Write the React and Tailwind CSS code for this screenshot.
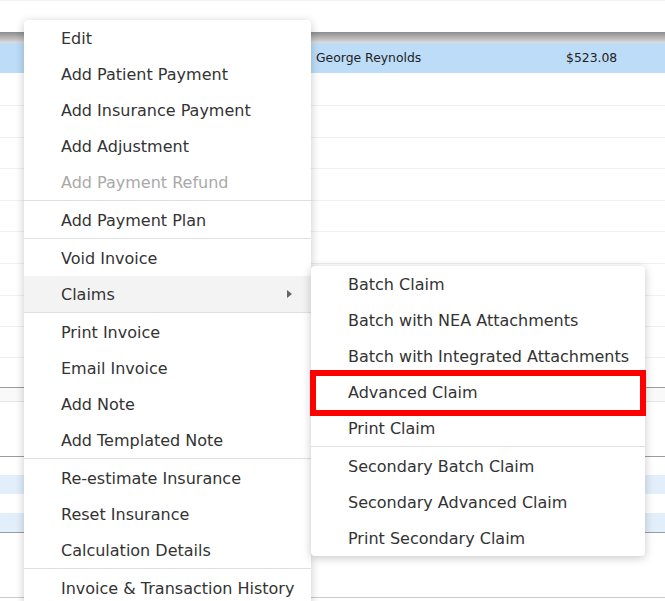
import React from "react";

const mainItems = [
  { t: "Edit" },
  { t: "Add Patient Payment" },
  { t: "Add Insurance Payment" },
  { t: "Add Adjustment" },
  { t: "Add Payment Refund", disabled: true },
  { sep: true },
  { t: "Add Payment Plan" },
  { sep: true },
  { t: "Void Invoice" },
  { t: "Claims", sub: true, hover: true },
  { sep: true },
  { t: "Print Invoice" },
  { t: "Email Invoice" },
  { t: "Add Note" },
  { t: "Add Templated Note" },
  { sep: true },
  { t: "Re-estimate Insurance" },
  { t: "Reset Insurance" },
  { t: "Calculation Details" },
  { sep: true },
  { t: "Invoice & Transaction History" },
];

const subItems = [
  { t: "Batch Claim" },
  { t: "Batch with NEA Attachments" },
  { t: "Batch with Integrated Attachments" },
  { t: "Advanced Claim" },
  { t: "Print Claim" },
  { sep: true },
  { t: "Secondary Batch Claim" },
  { t: "Secondary Advanced Claim" },
  { t: "Print Secondary Claim" },
];

function MenuItem({ it }) {
  if (it.sep)
    return (
      <div className="h-[2px] pb-px">
        <div className="h-px bg-[#e0e0e0]" />
      </div>
    );
  return (
    <div
      className={
        "relative flex h-[36px] items-center pl-[37px] pt-px text-[16px] " +
        (it.disabled ? "text-[#a9a9a9] " : "text-[#333333] ") +
        (it.hover ? "bg-[#f3f3f3]" : "")
      }
    >
      {it.t}
      {it.sub && (
        <span className="absolute right-[19px] top-1/2 -translate-y-1/2 h-0 w-0 border-y-[4px] border-l-[5px] border-y-transparent border-l-[#666666]" />
      )}
    </div>
  );
}

export default function App() {
  const rowHeights = [33, 32, 31, 32, 31, 32, 32, 31, 31];
  return (
    <div
      className="relative h-[601px] w-[665px] overflow-hidden bg-white"
      style={{ fontFamily: '"DejaVu Sans", Verdana, sans-serif' }}
    >
      {/* background table */}
      <div className="flex flex-col">
        <div className="h-px bg-[#f2f2f2]" />
        <div className="h-[31px]" />
        <div className="h-[11px] bg-gradient-to-b from-[#8c8c8c] to-[#dedede]" />
        <div className="flex h-[30px] items-center bg-[#bcdcf7] text-[12.4px] text-[#222]">
          <span className="ml-[316px] w-[250px]">George Reynolds</span>
          <span>$523.08</span>
        </div>
        {rowHeights.map((h, i) => (
          <div key={i} className="border-b border-[#f0f0f0]" style={{ height: h }} />
        ))}
        <div className="h-[30px] border-b border-[#9c9c9c]" />
        <div className="h-[14px] border-b border-[#e6e6e6] bg-[#f9f9f9]" />
        <div className="h-[55px] border-b border-[#9c9c9c]" />
        <div className="h-[18px]" />
        <div className="h-[19px] bg-[#e2effb]" />
        <div className="h-[19px]" />
        <div className="h-[20px] border-b border-[#9c9c9c] bg-[#e2effb]" />
        <div className="h-[65px] border-b border-[#cccccc]" />
      </div>

      {/* main context menu */}
      <div className="absolute left-[24px] top-[20px] w-[287px] rounded-[4px] bg-white shadow-[0_2px_10px_rgba(0,0,0,0.22)]">
        {mainItems.map((it, i) => (
          <MenuItem key={i} it={it} />
        ))}
      </div>

      {/* submenu */}
      <div className="absolute left-[311px] top-[266px] w-[334px] rounded-[4px] bg-white shadow-[0_2px_10px_rgba(0,0,0,0.22)]">
        {subItems.map((it, i) => (
          <MenuItem key={i} it={it} />
        ))}
      </div>

      {/* highlight annotation */}
      <div className="absolute left-[310px] top-[370px] h-[46px] w-[336px] border-[6px] border-[#ff0000]" />
    </div>
  );
}
